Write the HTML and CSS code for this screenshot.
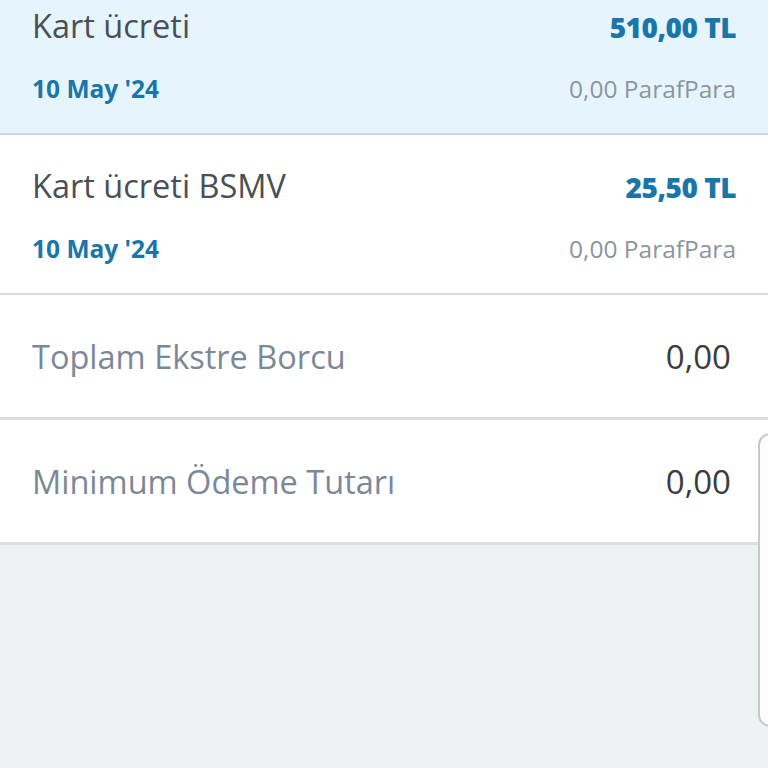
FILE: index.html
```html
<!DOCTYPE html>
<html lang="tr">
<head>
  <meta charset="UTF-8" />
  <meta name="viewport" content="width=device-width, initial-scale=1.0"/>
  <title>Ekstre</title>
  <link rel="stylesheet" href="styles.css">
</head>
<body>

<div class="list">
  <div class="txn selected">
    <div class="txn-line">
      <span class="txn-title">Kart ücreti</span>
      <span class="txn-amount">510,00 TL</span>
    </div>
    <div class="txn-line">
      <span class="txn-date">10 May '24</span>
      <span class="txn-points">0,00 ParafPara</span>
    </div>
  </div>
  <div class="txn">
    <div class="txn-line">
      <span class="txn-title">Kart ücreti BSMV</span>
      <span class="txn-amount">25,50 TL</span>
    </div>
    <div class="txn-line">
      <span class="txn-date">10 May '24</span>
      <span class="txn-points">0,00 ParafPara</span>
    </div>
  </div>

  <div class="summary">
    <span class="summary-label">Toplam Ekstre Borcu</span>
    <span class="summary-value">0,00</span>
  </div>
  <div class="summary">
    <span class="summary-label">Minimum Ödeme Tutarı</span>
    <span class="summary-value">0,00</span>
  </div>
</div>

<div class="side-tab"></div>

</body>
</html>
```

FILE: styles.css
```css
body {
  margin: 0;
  font-family: 'Open Sans', sans-serif;
  background: #eff2f3;
  overflow: hidden;
  height: 768px;
}

.list {
  margin-top: -25px;
}

.txn {
  background: white;
  padding: 31px 32px 28px 32px;
  border-bottom: 2px solid #d8dcde;
  display: flex;
  flex-direction: column;
  gap: 27px;
}

.txn.selected {
  background: #e6f5fd;
  border-bottom-color: #cfd9dc;
}

.txn-line {
  display: flex;
  justify-content: space-between;
  align-items: baseline;
}

.txn-line:first-child {
  height: 40px;
  line-height: 40px;
}

.txn-line:last-child {
  height: 32px;
  line-height: 32px;
}

.txn-title {
  font-size: 32.5px;
  color: #4a4f55;
}

.txn-amount {
  font-size: 28px;
  font-weight: 800;
  letter-spacing: -0.5px;
  color: #1a75a8;
}

.txn-date {
  font-size: 24.5px;
  font-weight: bold;
  color: #1a75a8;
}

.txn-points {
  font-size: 24.5px;
  color: #8d959c;
}

.summary {
  background: white;
  height: 122px;
  padding: 0 37px 0 32px;
  border-bottom: 3px solid #dcdddd;
  display: flex;
  justify-content: space-between;
  align-items: center;
}

.summary-label {
  font-size: 32.5px;
  color: #7b8896;
}

.summary-value {
  font-size: 33px;
  color: #3a3b3c;
}

.side-tab {
  position: absolute;
  left: 758px;
  top: 433px;
  width: 30px;
  height: 290px;
  border: 2px solid #c9c9c9;
  border-radius: 12px;
  background: #fdfdfd;
}
```
